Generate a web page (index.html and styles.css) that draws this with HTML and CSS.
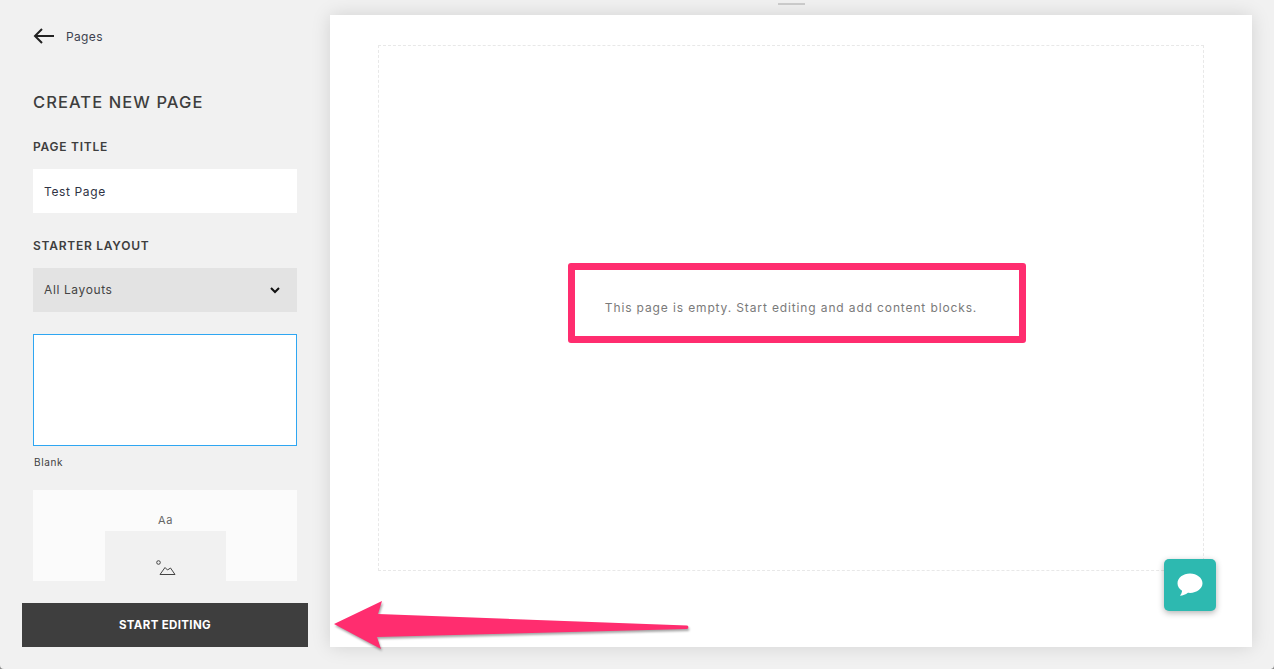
FILE: index.html

```html
<!doctype html>
<html lang="en">

<head>
	<meta charset="utf-8">
	<title>Create New Page</title>
	<link rel="stylesheet" href="styles.css">
</head>

<body>
	<div class="app">
		<aside class="sidebar">
			<div class="panel">
				<a class="back">
					<svg class="back-icon" width="22" height="16" viewBox="0 0 22 16">
						<path d="M21 8H2M9 1L2 8l7 7" fill="none" stroke="#222" stroke-width="2" />
					</svg>
					<span>Pages</span>
				</a>
				<h1 class="panel-title">CREATE NEW PAGE</h1>
				<div class="label label-title">PAGE TITLE</div>
				<div class="field">Test Page</div>
				<div class="label label-layout">STARTER LAYOUT</div>
				<div class="field select">
					<span>All Layouts</span>
					<svg width="10" height="7" viewBox="0 0 10 7">
						<path d="M1 1l4 4 4-4" fill="none" stroke="#111" stroke-width="2" />
					</svg>
				</div>
				<div class="layout-card selected"></div>
				<div class="card-name">Blank</div>
				<div class="layout-card preview">
					<div class="preview-text">Aa</div>
					<div class="preview-image">
						<svg width="20" height="16" viewBox="0 0 20 16">
							<circle cx="2.500" cy="2.500" r="1.800" fill="none" stroke="#444" stroke-width="1" />
							<path d="M4 14.500L9 7.500l2.500 2.500 3-2 4.500 6.500z" fill="none" stroke="#444" stroke-width="1" />
						</svg>
					</div>
				</div>
			</div>
			<button class="start">START EDITING</button>
		</aside>
		<main class="main">
			<div class="grabber"></div>
			<div class="canvas">
				<div class="dropzone">This page is empty. Start editing and add content blocks.</div>
				<div class="chat">
					<svg width="26" height="24" viewBox="0 0 26 24">
						<path d="M13 .5C6.100.5.500 4.900.500 10.300c0 3.100 1.700 5.700 4.600 7.500-.2 1.900-1 3.500-2.100 5 2.900-.2 5.700-1.200 7.900-3 .7.100 1.400.1 2.100.1 6.900 0 12.500-4.300 12.500-9.600S19.900.5 13 .5z" fill="#fff" />
					</svg>
				</div>
			</div>
		</main>
	</div>
	<div class="highlight"></div>
	<svg class="pointer" width="370" height="60" viewBox="0 0 370 60">
		<path d="M4 25L52 2l-4 13 309 11.500a1.800 1.800 0 0 1 0 3.500L47 38l4 12z" fill="#ff2d6f" />
	</svg>
</body>

</html>
```

FILE: styles.css

```css
html {
	background: #8a8a8a;
}
html,
body {
	margin: 0;
	padding: 0;
	width: 1274px;
	height: 669px;
	overflow: hidden;
}
body {
	background: #f1f1f1;
	border-radius: 0 0 4px 4px;
	font-family: "Inter", "Liberation Sans", sans-serif;
	color: #3e3e3e;
}
.app {
	display: flex;
	height: 669px;
}
.sidebar {
	flex: none;
	width: 330px;
	box-sizing: border-box;
	padding: 0 22px 22px;
	display: flex;
	flex-direction: column;
}
.panel {
	height: 581px;
	margin-bottom: 22px;
	padding: 0 11px;
	overflow: hidden;
	flex: none;
}
.back {
	display: flex;
	align-items: center;
	height: 16px;
	margin-top: 28px;
	font-size: 12px;
	letter-spacing: 0.35px;
	color: #3d4250;
}
.back-icon {
	margin-right: 11px;
}
.panel-title {
	margin: 48px 0 0;
	height: 20px;
	line-height: 20px;
	font-size: 16.5px;
	font-weight: 500;
	letter-spacing: 1.08px;
}
.label {
	height: 14px;
	line-height: 14px;
	font-size: 12px;
	font-weight: 600;
	letter-spacing: 0.75px;
}
.label-title {
	margin-top: 28px;
}
.label-layout {
	margin-top: 26px;
}
.field {
	margin-top: 15px;
	height: 44px;
	line-height: 46px;
	padding: 0 11px;
	background: #fff;
	font-size: 12px;
	letter-spacing: 0.62px;
	color: #2f3344;
}
.select {
	display: flex;
	align-items: center;
	justify-content: space-between;
	padding-right: 17px;
	line-height: 44px;
	background: #e3e3e3;
	color: #444;
}
.layout-card {
	height: 112px;
	box-sizing: border-box;
	margin-top: 22px;
	background: #fff;
}
.selected {
	border: 1px solid #2ea6f2;
}
.card-name {
	margin: 9px 0 0 1px;
	height: 14px;
	line-height: 14px;
	font-size: 10px;
	letter-spacing: 0.6px;
}
.preview {
	margin-top: 21px;
	height: 91px;
	padding-top: 23px;
	background: #fbfbfb;
	display: flex;
	flex-direction: column;
	align-items: center;
}
.preview-text {
	height: 18px;
	line-height: 14px;
	font-size: 11px;
	letter-spacing: 0.5px;
	color: #666;
	margin-left: 1px;
}
.preview-image {
	flex: 1;
	width: 121px;
	box-sizing: border-box;
	margin-left: 1px;
	padding-top: 29px;
	background: #f1f1f1;
	text-align: center;
}
.start {
	flex: none;
	height: 44px;
	border: 0;
	padding: 0;
	background: #3e3e3e;
	color: #fff;
	font-family: inherit;
	font-size: 11.500px;
	font-weight: 700;
	letter-spacing: 0.35px;
}
.main {
	position: relative;
	flex: 1;
	padding: 15px 22px 22px 0;
}
.grabber {
	position: absolute;
	left: 448px;
	top: 3px;
	width: 27px;
	height: 2px;
	background: #cdcdcd;
}
.canvas {
	position: relative;
	height: 632px;
	box-sizing: border-box;
	padding: 30px 48px 76px;
	background: #fff;
	box-shadow: 0 0 18px rgba(0, 0, 0, 0.13);
}
.dropzone {
	height: 100%;
	box-sizing: border-box;
	padding-bottom: 1px;
	border: 1px dashed #e8e8e8;
	display: flex;
	align-items: center;
	justify-content: center;
	font-size: 12px;
	letter-spacing: 0.87px;
	color: #7a7a7a;
}
.chat {
	position: absolute;
	left: 834px;
	top: 544px;
	width: 52px;
	height: 52px;
	border-radius: 5px;
	background: #2db9b0;
	box-shadow: 0 2px 6px rgba(0, 0, 0, 0.3);
	display: flex;
	align-items: center;
	justify-content: center;
}
.highlight {
	position: absolute;
	left: 568px;
	top: 263px;
	width: 458px;
	height: 80px;
	box-sizing: border-box;
	border: 7px solid #ff2d6f;
	border-radius: 3px;
}
.pointer {
	position: absolute;
	left: 330px;
	top: 599px;
	filter: drop-shadow(1px 2px 1px rgba(0, 0, 0, 0.35));
}
```
